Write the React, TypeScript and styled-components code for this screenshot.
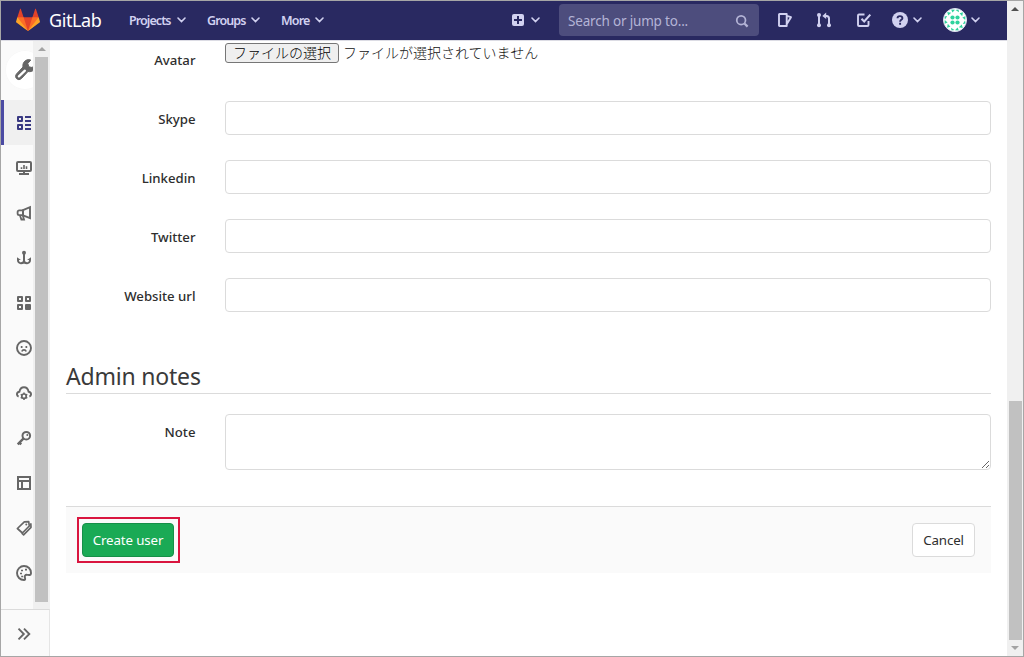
import React from "react";
import styled, { createGlobalStyle } from "styled-components";

const GlobalStyle = createGlobalStyle`
  * { box-sizing: border-box; }
  body { margin: 0; overflow: hidden; }
`;

const Frame = styled.div`
  display: flex;
  width: 1024px;
  height: 657px;
  border: 1px solid #a6a6a6;
  background: #fff;
  color: #2e2e2e;
  font: 14px/20px "Noto Sans", "Noto Sans CJK JP", sans-serif;
`;

const Page = styled.div`
  display: flex;
  flex-direction: column;
  width: 1006px;
`;

/* ---------- top bar ---------- */

const Header = styled.header`
  display: flex;
  align-items: center;
  height: 40px;
  padding: 0 27px 1px 15px;
  background: #292961;
  border-bottom: 1px solid #dcdce4;
  color: #d1d1f0;
`;

const Spacer = styled.span<{ $w: number }>`
  flex: 0 0 ${(p) => p.$w}px;
`;

const Brand = styled.span`
  width: 80px;
  margin-left: 9px;
  color: #fff;
  font-size: 18px;
  line-height: 24px;
  letter-spacing: -0.4px;
  white-space: nowrap;
`;

const MenuLink = styled.span<{ $w: number; $ls: number }>`
  width: ${(p) => p.$w}px;
  margin-right: 5px;
  padding-top: 1px;
  font-size: 12.5px;
  font-weight: 600;
  letter-spacing: ${(p) => p.$ls}px;
  white-space: nowrap;
`;

const Right = styled.div`
  display: flex;
  align-items: center;
  margin-left: auto;
`;

const Search = styled.div`
  display: flex;
  align-items: center;
  justify-content: space-between;
  width: 200px;
  height: 32px;
  padding: 1px 10px 0 9px;
  border-radius: 4px;
  background: #4d4d7d;
  color: #b4b4d6;
  font-size: 13.5px;
  letter-spacing: -0.18px;
  white-space: nowrap;
`;

/* ---------- sidebar ---------- */

const Body = styled.div`
  display: flex;
  flex: 1;
  min-height: 0;
`;

const Sidebar = styled.aside`
  display: flex;
  flex-direction: column;
  flex: 0 0 49px;
  background: #fafafa;
  color: #666;
`;

const SideScroll = styled.div`
  display: flex;
  height: 568px;
`;

const SideNav = styled.nav`
  width: 32px;
  overflow: hidden;
`;

const AvatarCircle = styled.div`
  display: flex;
  align-items: center;
  justify-content: center;
  width: 40px;
  height: 40px;
  margin: 9px 0 10px 4px;
  border-radius: 50%;
  background: #fff;
  box-shadow: inset 0 0 0 1px #f8f8f8;
`;

const SideItem = styled.div<{ $active?: boolean }>`
  display: flex;
  align-items: center;
  width: 49px;
  height: 45px;
  padding-left: ${(p) => (p.$active ? 12 : 15)}px;
  border-left: ${(p) => (p.$active ? "3px solid #4b4ba3" : "0")};
  background: ${(p) => (p.$active ? "#f0f0f0" : "transparent")};
  color: ${(p) => (p.$active ? "#393982" : "#666")};
`;

const Toggle = styled.div`
  display: flex;
  align-items: center;
  flex: 1;
  padding: 1px 0 0 15px;
  border-top: 1px solid #dbdbdb;
  border-right: 1px solid #e5e5e5;
`;

/* ---------- scrollbars ---------- */

const Track = styled.div<{ $w: number }>`
  display: flex;
  flex-direction: column;
  align-items: center;
  width: ${(p) => p.$w}px;
  background: #f0f0f0;
`;

const Arrow = styled.span<{ $c: string; $down?: boolean }>`
  flex: 0 0 16px;
  display: flex;
  align-items: center;
  &::before {
    content: "";
    border: 4px solid transparent;
    border-${(p) => (p.$down ? "top" : "bottom")}-color: ${(p) => p.$c};
    margin-${(p) => (p.$down ? "top" : "bottom")}: 4px;
  }
`;

const Thumb = styled.div<{ $top: number; $h: number }>`
  width: 13px;
  height: ${(p) => p.$h}px;
  margin-top: ${(p) => p.$top}px;
  background: #c1c1c1;
`;

/* ---------- form ---------- */

const Main = styled.main`
  flex: 1;
  padding: 1px 16px 0 16px;
`;

const Row = styled.div`
  display: flex;
  margin-bottom: 25px;
`;

const Label = styled.label`
  width: 129.5px;
  margin-right: 29.5px;
  padding-top: 8px;
  text-align: right;
  font-size: 13.2px;
  font-weight: 500;
  white-space: nowrap;
`;

const Input = styled.input`
  flex: 1;
  height: 34px;
  border: 1px solid #dbdbdb;
  border-radius: 4px;
  background: #fff;
`;

const NoteBox = styled.textarea`
  flex: 1;
  height: 56px;
  border: 1px solid #dbdbdb;
  border-radius: 4px;
  background: #fff;
`;

const FileField = styled.div`
  display: flex;
  height: 34px;
  padding-top: 1px;
  gap: 4px;
  color: #111;
  font: 300 14px/18px "Noto Sans CJK JP", sans-serif;
  white-space: nowrap;
`;

const FileButton = styled.button`
  width: 114px;
  height: 20px;
  padding: 0 0 1px;
  border: 1px solid #767676;
  border-radius: 3px;
  background: #efefef;
  color: #000;
  font: 300 14px/17px "Noto Sans CJK JP", sans-serif;
`;

const Legend = styled.h2`
  height: 45px;
  margin: 37px 0 20px;
  padding-top: 11px;
  border-bottom: 1px solid #dbdbdb;
  color: #3a3a3a;
  font-size: 23px;
  line-height: 32px;
  font-weight: 400;
  letter-spacing: -0.2px;
`;

const Actions = styled.div`
  display: flex;
  align-items: center;
  justify-content: space-between;
  height: 67px;
  margin-top: 36px;
  padding: 0 16px 0 11px;
  border-top: 1px solid #dbdbdb;
  background: #fafafa;
`;

const Highlight = styled.div`
  padding: 4px 4px 4px 3px;
  border: 2px solid #d9153f;
`;

const Button = styled.button<{ $primary?: boolean }>`
  display: block;
  width: ${(p) => (p.$primary ? 92 : 63)}px;
  height: 34px;
  padding: 0;
  border: 1px solid ${(p) => (p.$primary ? "#168f48" : "#dbdbdb")};
  border-radius: 4px;
  background: ${(p) => (p.$primary ? "#1aaa55" : "#fff")};
  color: ${(p) => (p.$primary ? "#fff" : "#2e2e2e")};
  font: 13.3px/20px "Noto Sans", sans-serif;
  letter-spacing: -0.12px;
  white-space: nowrap;
`;

/* ---------- icons ---------- */

const Svg = styled.svg`
  flex: none;
  display: block;
`;

type IconProps = { size?: number; sw?: number; children: React.ReactNode };
const Icon = ({ size = 16, sw = 2, children }: IconProps) => (
  <Svg width={size} height={size} viewBox="0 0 16 16" fill="none" stroke="currentColor" strokeWidth={sw}>
    {children}
  </Svg>
);

const Chevron = () => (
  <Svg width="9" height="6" viewBox="0 0 9 6" fill="none" stroke="currentColor" strokeWidth="1.6" strokeLinecap="round">
    <path d="M1 1l3.5 3.6L8 1" />
  </Svg>
);

const Tanuki = () => (
  <Svg width="24" height="24" viewBox="0 0 36 36">
    <path fill="#e24329" d="M2 14l9.38 9v-9l-4-12.28c-.205-.632-1.176-.632-1.38 0z" />
    <path fill="#e24329" d="M34 14l-9.38 9v-9l4-12.28c.205-.632 1.176-.632 1.38 0z" />
    <path fill="#e24329" d="M18 34.38L3 14h30z" />
    <path fill="#fc6d26" d="M18 34.38L11.38 14H2l4 11z" />
    <path fill="#fc6d26" d="M18 34.38L24.62 14H34l-4 11z" />
    <path fill="#fca326" d="M2 14L.1 20.16c-.18.565 0 1.2.5 1.56l17.42 12.66z" />
    <path fill="#fca326" d="M34 14l1.9 6.16c.18.565 0 1.2-.5 1.56L18 34.38z" />
  </Svg>
);

const Identicon = () => (
  <Svg width="24" height="24" viewBox="0 0 24 24">
    <circle cx="12" cy="12" r="11.5" fill="#fff" />
    <g fill="#2fd39d">
      {[0, 90, 180, 270].map((a) => (
        <g key={a} transform={`rotate(${a} 12 12)`}>
          <circle cx="9.5" cy="9.5" r="2.1" />
          <path d="M8 1.300L12 1.800 9.500 4.600zM4.200 4l4 .8-3 2.600zM1.200 8.500L4.200 8 2 11.500z" />
        </g>
      ))}
    </g>
    <circle cx="12" cy="12" r="11.5" fill="none" stroke="#dfe3f2" strokeWidth="1" />
  </Svg>
);

const sideIcons: Record<string, React.ReactNode> = {
  overview: (
    <>
      <path d="M2 2h4v4H2zM2 10h4v4H2z" strokeLinejoin="round" />
      <path d="M9 2h6M9 6h6M9 10h6M9 14h6" />
    </>
  ),
  monitor: (
    <>
      <rect x="1" y="2" width="14" height="9" rx="1" />
      <path d="M8 11v3M3 14h10" />
      <path d="M5.500 9V7.300M8 9V5M10.500 9V6.200" strokeWidth="1.600" />
    </>
  ),
  messages: (
    <>
      <path d="M7 5.200L14 2.200v11L7 10.300z" strokeWidth="1.900" />
      <path d="M7 5.400H3.200a1.600 1.600 0 0 0-1.600 1.600v1.600a1.600 1.600 0 0 0 1.600 1.600H7zM4 10.500l1.400 4H8l-1.100-3.700" strokeWidth="1.800" />
    </>
  ),
  hook: (
    <>
      <path d="M8 4v8.500M2 9v1.200A2.900 2.900 0 0 0 5 13.200c1.700 0 3-1.200 3-2.700 0 1.500 1.300 2.700 3 2.700a2.900 2.900 0 0 0 3-3V9" />
      <path d="M1 10V7.200L5 10zM15 10V7.200L11 10z" fill="currentColor" stroke="none" />
      <circle cx="8" cy="2.800" r="2" fill="currentColor" stroke="none" />
    </>
  ),
  applications: (
    <>
      <path d="M2 2h4v4H2zM10 2h4v4h-4zM2 10h4v4H2z" strokeLinejoin="round" />
      <rect x="9" y="9" width="6" height="6" rx="1" fill="currentColor" stroke="none" />
    </>
  ),
  abuse: (
    <>
      <circle cx="8" cy="8" r="7" strokeWidth="1.900" />
      <path d="M5.800 11.600c.4-1.200 1.200-1.700 2.200-1.700s1.800.5 2.200 1.700" strokeWidth="1.600" />
      <path d="M4.800 7h1.700M9.500 7h1.700" strokeWidth="1.900" />
    </>
  ),
  cloud: (
    <>
      <path d="M2.600 11.600C.2 10.600.4 7.100 3.400 6.700 4 3.600 6 2.300 8 2.300s4 1.300 4.600 4.400c3 .4 3.200 3.900.8 4.900" strokeWidth="1.900" />
      <circle cx="8" cy="11.200" r="2.200" strokeWidth="1.700" />
      <path d="M8 7.400V9M8 13.400V15M4.700 9.300l1.400.8M9.900 12.300l1.400.8M4.700 13.100l1.400-.8M9.900 10.100l1.400-.8" strokeWidth="1.500" />
    </>
  ),
  key: (
    <>
      <circle cx="10.300" cy="5.700" r="3.800" />
      <path d="M7.600 8.400L1.700 14.300M3.200 12.300l2 2" strokeWidth="2.400" />
      <circle cx="11.300" cy="4.900" r="1" fill="currentColor" stroke="none" />
    </>
  ),
  template: <path d="M2 2h12v12H2zM2 6h12M6 6v8" />,
  labels: (
    <>
      <path d="M1.400 8.500L8.300 1.800l4.400-.2.600 4.400-6.900 7z" strokeWidth="1.700" strokeLinejoin="round" />
      <path d="M14.800 3.200l.2 4.200-7.400 7.400-1.800-1.600" strokeWidth="1.700" strokeLinejoin="round" />
      <circle cx="10.300" cy="4.600" r="1" fill="currentColor" stroke="none" />
    </>
  ),
  appearance: (
    <>
      <path d="M15 8.300C15.200 4 11.900 1 8 1a7 7 0 0 0-7 7c0 4 3 7 7 7 1.200 0 1.300-.9 1-2-.6-2 .3-3.400 2-3.200 1.200.1 3.800 1 4-1.500z" strokeWidth="1.900" />
      <path d="M4 8.500h2M5 5.500h2M9 4.700h2M5.200 11.500h2" strokeWidth="1.700" />
    </>
  ),
};

const order = ["overview", "monitor", "messages", "hook", "applications", "abuse", "cloud", "key", "template", "labels", "appearance"];

const fields = ["Skype", "Linkedin", "Twitter", "Website url"];

export default function App() {
  return (
    <>
      <GlobalStyle />
      <Frame>
        <Page>
          <Header>
            <Tanuki />
            <Brand>GitLab</Brand>
            <MenuLink $w={43} $ls={-0.92}>Projects</MenuLink>
            <Chevron />
            <Spacer $w={21} />
            <MenuLink $w={39} $ls={-0.92}>Groups</MenuLink>
            <Chevron />
            <Spacer $w={21} />
            <MenuLink $w={29} $ls={-0.8}>More</MenuLink>
            <Chevron />
            <Right>
              <Svg width="12" height="12" viewBox="0 0 12 12">
                <rect width="12" height="12" rx="2" fill="#d1d1f0" />
                <path d="M6 2v8M2 6h8" stroke="#292961" strokeWidth="2" />
              </Svg>
              <Spacer $w={7} />
              <Chevron />
              <Spacer $w={19} />
              <Search>
                Search or jump to...
                <Icon size={14}>
                  <circle cx="7" cy="7" r="5" />
                  <path d="M10.800 10.800l3.600 3.600" strokeWidth="2.600" />
                </Icon>
              </Search>
              <Spacer $w={18} />
              <Icon>
                <path d="M2.500 2h7.200v12H2.500a.5.5 0 0 1-.5-.5v-11a.5.5 0 0 1 .5-.5zM10 3.800l4 1.400-4 6.500" strokeLinejoin="round" strokeWidth="1.900" />
              </Icon>
              <Spacer $w={23} />
              <Icon>
                <path d="M3 3v11M13 14V6.500C13 5 12 4 10.500 4H9" />
                <path d="M10.200 .5v6.600L6.300 3.900z" fill="currentColor" stroke="none" />
                <g fill="currentColor" stroke="none">
                  <circle cx="3" cy="3" r="2" />
                  <circle cx="3" cy="13.200" r="2" />
                  <circle cx="13" cy="13.200" r="2" />
                </g>
              </Icon>
              <Spacer $w={24} />
              <Icon>
                <path d="M8.500 2.500H3a1 1 0 0 0-1 1V13a1 1 0 0 0 1 1h8.500a1 1 0 0 0 1-1V9" strokeWidth="1.900" />
                <path d="M5.500 6.700l2.700 2.700L14.300 2.600" strokeWidth="2.100" />
              </Icon>
              <Spacer $w={20} />
              <Icon>
                <circle cx="8" cy="8" r="8" fill="currentColor" stroke="none" />
                <path d="M5.500 6.300C5.500 4.900 6.500 4.100 8 4.100s2.400.8 2.400 2.100c0 1.700-2.300 1.600-2.300 3.500M8.100 10.800v2" stroke="#292961" strokeWidth="1.900" />
              </Icon>
              <Spacer $w={5} />
              <Chevron />
              <Spacer $w={21} />
              <Identicon />
              <Spacer $w={4} />
              <Chevron />
            </Right>
          </Header>
          <Body>
            <Sidebar>
              <SideScroll>
                <SideNav>
                  <AvatarCircle>
                    <Svg width="24" height="24" viewBox="0 0 24 24">
                      <path
                        d="M10 9C9.300 5.500 11.500 2 15.500 1.600L17.800 2 14.800 5.400 15.800 8.800 19 9.500 22.600 6.900c.4 4.300-3.400 7.600-7.600 6.600l-6.500 7c-3.200 3.200-8-1-5-4.600z"
                        fill="#666"
                        stroke="#666"
                        strokeLinejoin="round"
                      />
                      <path d="M5.900 18.400l6-5.700" stroke="#fff" strokeWidth="2.300" strokeLinecap="round" />
                    </Svg>
                  </AvatarCircle>
                  {order.map((name, i) => (
                    <SideItem key={name} $active={i === 0}>
                      <Icon>{sideIcons[name]}</Icon>
                    </SideItem>
                  ))}
                </SideNav>
                <Track $w={17}>
                  <Arrow $c="#a3a3a3" />
                  <Thumb $top={0} $h={545} />
                </Track>
              </SideScroll>
              <Toggle>
                <Icon>
                  <path d="M2.500 2.700L7.800 8l-5.300 5.300M8 2.700L13.300 8 8 13.300" strokeWidth="1.900" />
                </Icon>
              </Toggle>
            </Sidebar>
            <Main>
              <Row>
                <Label>Avatar</Label>
                <FileField>
                  <FileButton>ファイルの選択</FileButton>
                  <span>ファイルが選択されていません</span>
                </FileField>
              </Row>
              {fields.map((f) => (
                <Row key={f}>
                  <Label>{f}</Label>
                  <Input aria-label={f} />
                </Row>
              ))}
              <Legend>Admin notes</Legend>
              <Row>
                <Label>Note</Label>
                <NoteBox aria-label="Note" />
              </Row>
              <Actions>
                <Highlight>
                  <Button $primary>Create user</Button>
                </Highlight>
                <Button>Cancel</Button>
              </Actions>
            </Main>
          </Body>
        </Page>
        <Track $w={16}>
          <Arrow $c="#505050" />
          <Thumb $top={384} $h={239} />
          <Arrow $c="#a3a3a3" $down />
        </Track>
      </Frame>
    </>
  );
}
